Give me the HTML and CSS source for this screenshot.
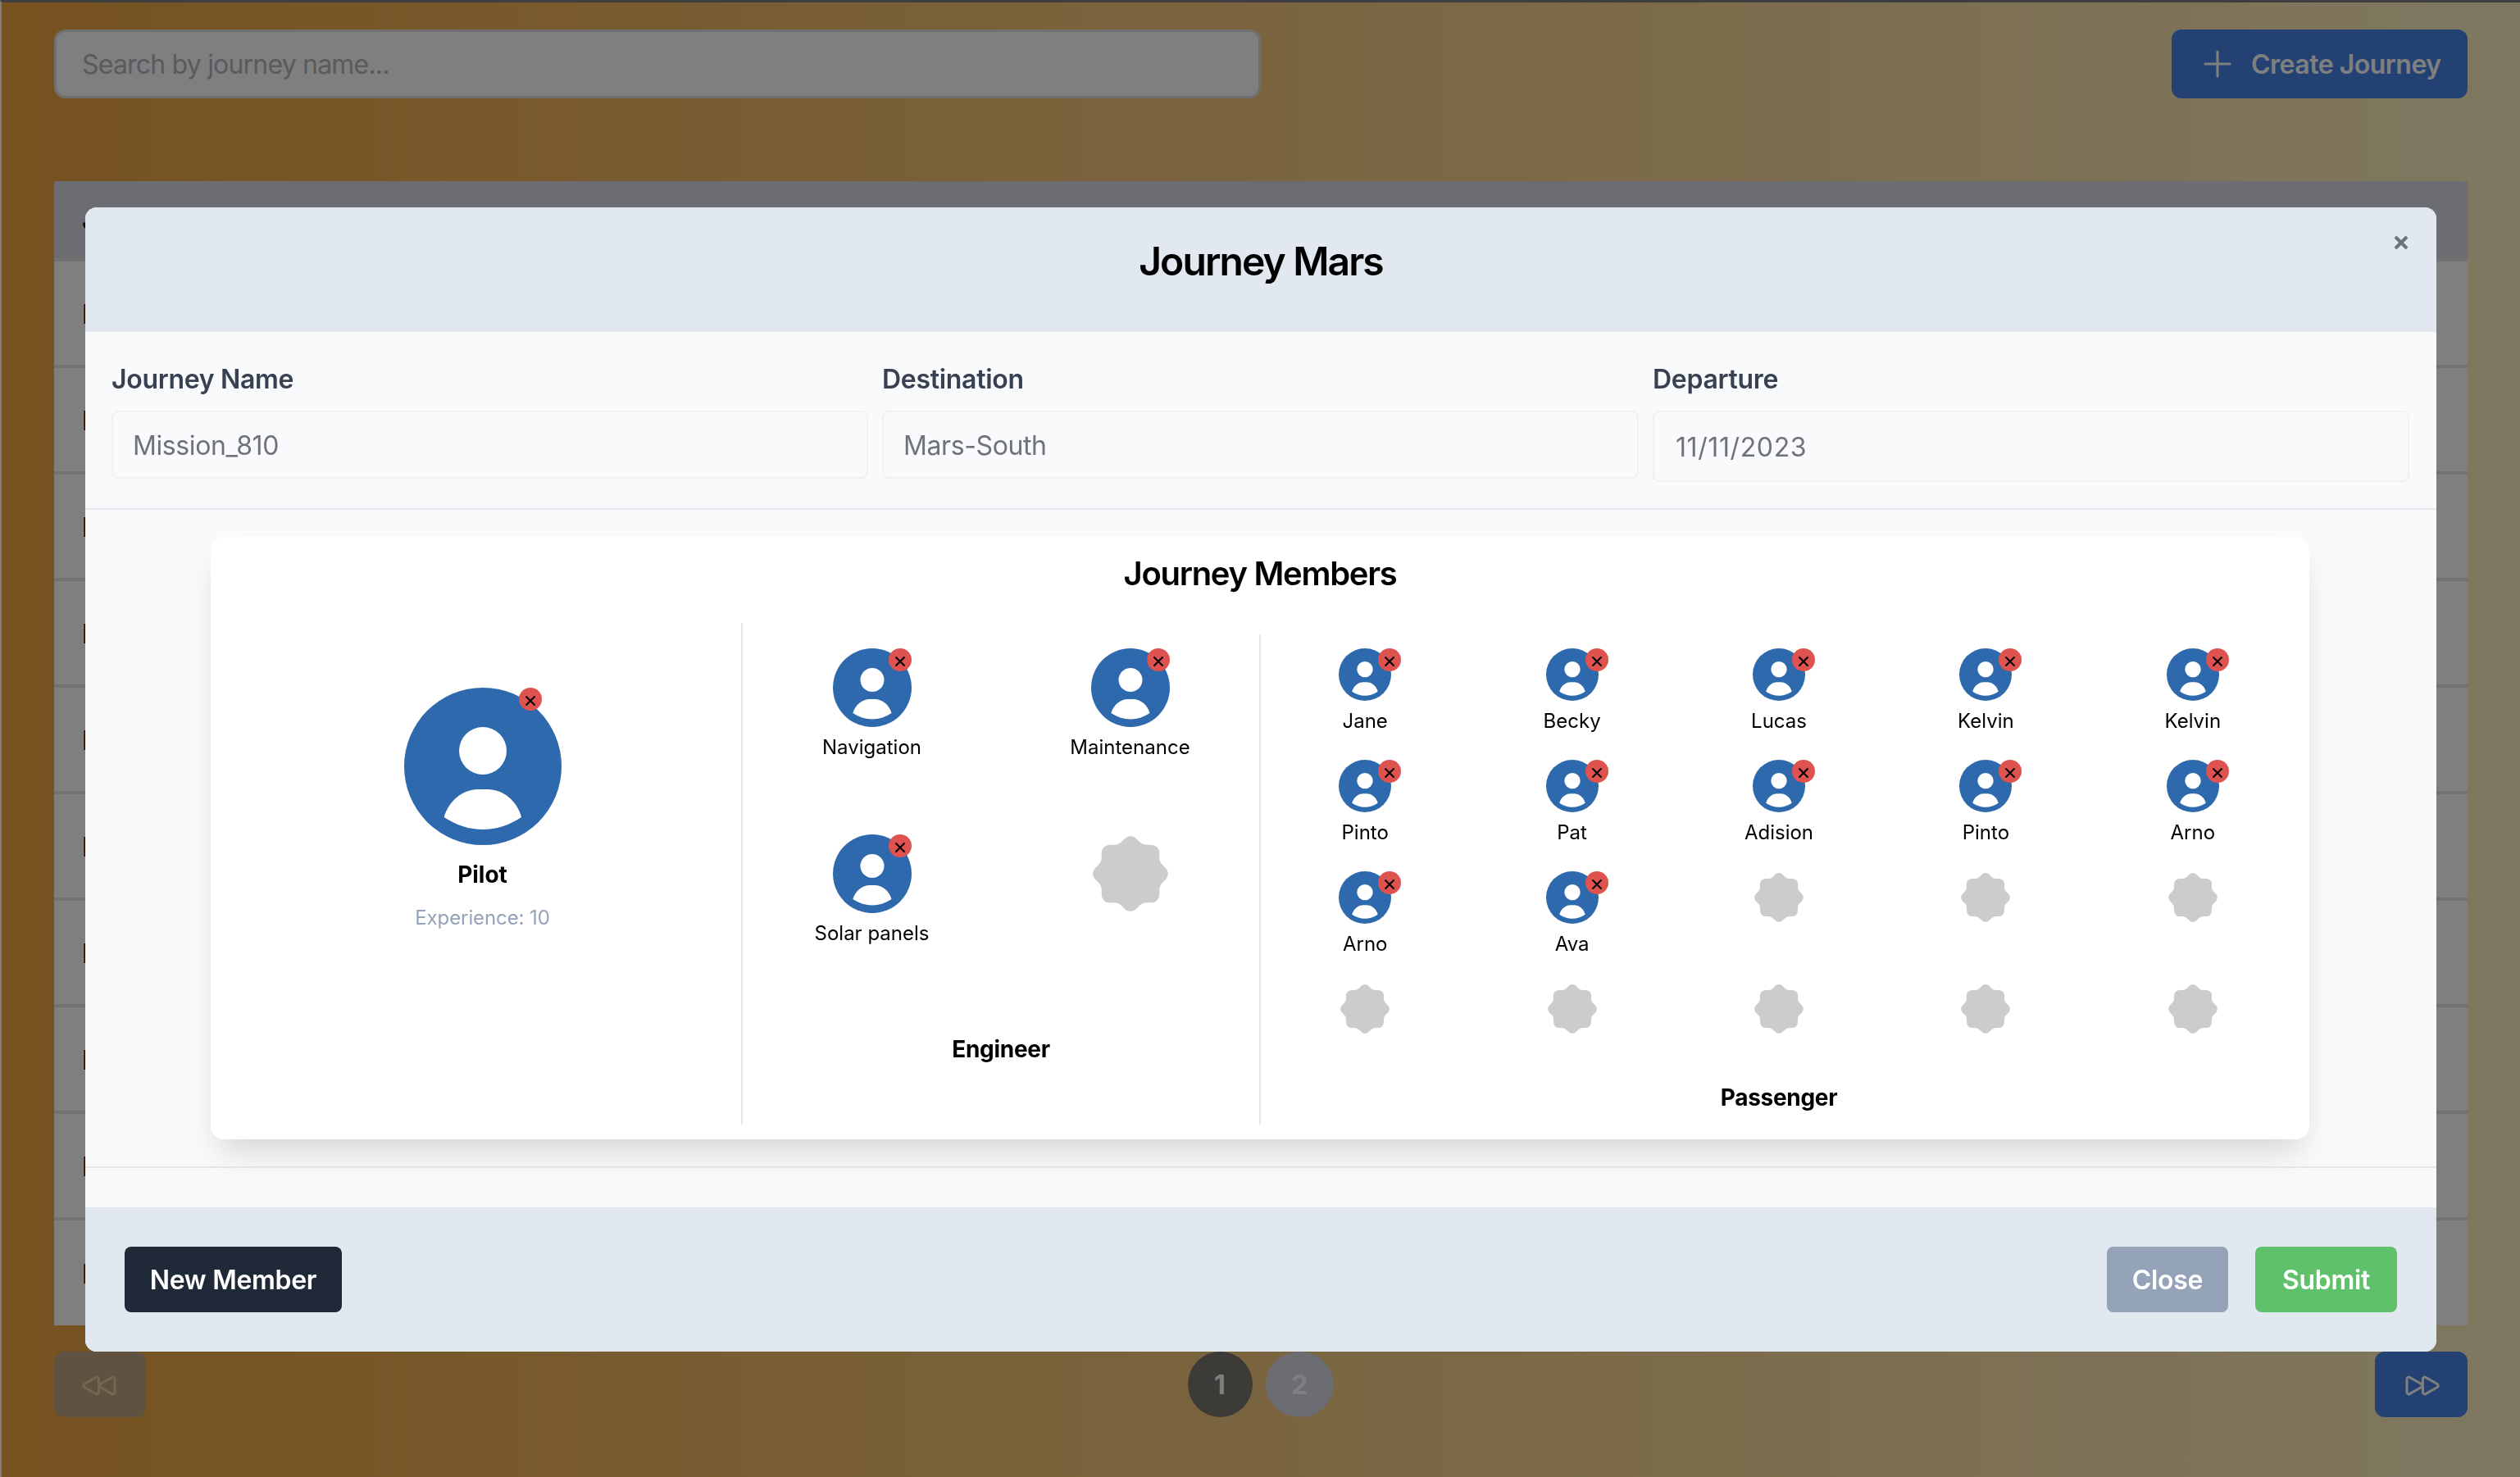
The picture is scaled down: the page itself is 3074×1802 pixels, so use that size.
FILE: index.html
```html
<!DOCTYPE html>
<html lang="en">

<head>
    <meta charset="UTF-8">
    <meta name="viewport" content="width=device-width, initial-scale=1.0">
    <title>Journeys</title>
    <link rel="stylesheet" href="styles.css">
</head>

<body>
    <svg class="defs" aria-hidden="true">
        <symbol id="person" viewBox="0 0 192 192">
            <circle cx="96" cy="96" r="96" fill="#2e69ad"></circle>
            <circle cx="96" cy="77" r="29" fill="#fff"></circle>
            <path d="M48.7 158C54 138 72 124 90 124H102C120 124 138 138 143 158C113 178 79 178 48.7 158Z" fill="#fff"></path>
        </symbol>
        <symbol id="blob" viewBox="0 0 100 100">
            <path d="M43.11 8.37Q50 0 56.89 8.37Q63.78 16.74 74.57 15.69Q85.36 14.64 84.31 25.43Q83.26 36.22 91.63 43.11Q100 50 91.63 56.89Q83.26 63.78 84.31 74.57Q85.36 85.36 74.57 84.31Q63.78 83.26 56.89 91.63Q50 100 43.11 91.63Q36.22 83.26 25.43 84.31Q14.64 85.36 15.69 74.57Q16.74 63.78 8.37 56.89Q0 50 8.37 43.11Q16.74 36.22 15.69 25.43Q14.64 14.64 25.43 15.69Q36.22 16.74 43.11 8.37Z" fill="#ccc" stroke="#ccc" stroke-width="8" stroke-linejoin="round"></path>
        </symbol>
        <symbol id="cross" viewBox="0 0 28 28">
            <circle cx="14" cy="14" r="14" fill="#de524f"></circle>
            <path d="M8.5 10.5L19.5 21.5M19.5 10.5L8.5 21.5" stroke="#000" stroke-width="2" fill="none"></path>
        </symbol>
    </svg>

    <div class="app">
        <div class="toolbar">
            <input class="search" type="text" placeholder="Search by journey name...">
            <button class="btn-create" type="button">
                <svg class="icon" viewBox="0 0 24 24" fill="none" stroke="currentColor" stroke-width="1.5" stroke-linecap="round">
                    <path d="M12 4.5v15m7.5-7.5h-15"></path>
                </svg>
                Create Journey
            </button>
        </div>

        <table class="journeys">
            <thead>
                <tr><th>Journey</th></tr>
            </thead>
            <tbody>
                <tr><td>Mars</td></tr>
                <tr><td>Mars</td></tr>
                <tr><td>Mars</td></tr>
                <tr><td>Mars</td></tr>
                <tr><td>Mars</td></tr>
                <tr><td>Mars</td></tr>
                <tr><td>Mars</td></tr>
                <tr><td>Mars</td></tr>
                <tr><td>Mars</td></tr>
                <tr><td>Mars</td></tr>
            </tbody>
        </table>

        <div class="pagination">
            <button class="page-arrow page-prev" type="button">
                <svg class="icon" viewBox="0 0 24 24" fill="none" stroke="currentColor" stroke-width="1.5" stroke-linecap="round" stroke-linejoin="round">
                    <path d="M21 16.811c0 .864-.933 1.405-1.683.977l-7.108-4.062a1.125 1.125 0 010-1.953l7.108-4.062A1.125 1.125 0 0121 8.688v8.123zM11.25 16.811c0 .864-.933 1.405-1.683.977l-7.108-4.062a1.125 1.125 0 010-1.953L9.567 7.71a1.125 1.125 0 011.683.977v8.123z"></path>
                </svg>
            </button>
            <div class="pages">
                <button class="page-num page-active" type="button">1</button>
                <button class="page-num" type="button">2</button>
            </div>
            <button class="page-arrow page-next" type="button">
                <svg class="icon" viewBox="0 0 24 24" fill="none" stroke="currentColor" stroke-width="1.5" stroke-linecap="round" stroke-linejoin="round">
                    <path d="M3 8.688c0-.864.933-1.405 1.683-.977l7.108 4.062a1.125 1.125 0 010 1.953l-7.108 4.062A1.125 1.125 0 013 16.81V8.688zM12.75 8.688c0-.864.933-1.405 1.683-.977l7.108 4.062a1.125 1.125 0 010 1.953l-7.108 4.062a1.125 1.125 0 01-1.683-.977V8.688z"></path>
                </svg>
            </button>
        </div>
    </div>

    <div class="overlay">
        <div class="modal">
            <div class="modal-header">
                <h2>Journey Mars</h2>
                <button class="modal-close" type="button" aria-label="Close">
                    <svg viewBox="0 0 18 18" fill="none" stroke="currentColor" stroke-width="4">
                        <path d="M2 2L16 16M16 2L2 16"></path>
                    </svg>
                </button>
            </div>

            <form class="journey-form">
                <div class="field">
                    <label for="name">Journey Name</label>
                    <input id="name" type="text" value="Mission_810" readonly>
                </div>
                <div class="field">
                    <label for="destination">Destination</label>
                    <input id="destination" type="text" value="Mars-South" readonly>
                </div>
                <div class="field">
                    <label for="departure">Departure</label>
                    <input id="departure" class="input-date" type="text" value="11/11/2023" readonly>
                </div>
            </form>

            <div class="members-wrap">
                <div class="members">
                    <h3>Journey Members</h3>
                    <div class="members-row">
                        <div class="col-pilot">
                            <div class="avatar avatar-lg">
                                <svg><use href="#person"></use></svg>
                                <svg class="badge"><use href="#cross"></use></svg>
                            </div>
                            <div class="pilot-name">Pilot</div>
                            <div class="pilot-exp">Experience: 10</div>
                        </div>

                        <div class="col-engineer">
                            <div class="grid-engineer">
                                <div class="member">
                                    <div class="avatar avatar-md">
                                        <svg><use href="#person"></use></svg>
                                        <svg class="badge"><use href="#cross"></use></svg>
                                    </div>
                                    <span>Navigation</span>
                                </div>
                                <div class="member">
                                    <div class="avatar avatar-md">
                                        <svg><use href="#person"></use></svg>
                                        <svg class="badge"><use href="#cross"></use></svg>
                                    </div>
                                    <span>Maintenance</span>
                                </div>
                                <div class="member">
                                    <div class="avatar avatar-md">
                                        <svg><use href="#person"></use></svg>
                                        <svg class="badge"><use href="#cross"></use></svg>
                                    </div>
                                    <span>Solar panels</span>
                                </div>
                                <div class="member">
                                    <div class="avatar avatar-md empty"><svg><use href="#blob"></use></svg></div>
                                </div>
                            </div>
                            <div class="col-title title-engineer">Engineer</div>
                        </div>

                        <div class="col-passenger">
                            <div class="grid-passenger">
                                <div class="member">
                                    <div class="avatar avatar-sm"><svg><use href="#person"></use></svg><svg class="badge"><use href="#cross"></use></svg></div>
                                    <span>Jane</span>
                                </div>
                                <div class="member">
                                    <div class="avatar avatar-sm"><svg><use href="#person"></use></svg><svg class="badge"><use href="#cross"></use></svg></div>
                                    <span>Becky</span>
                                </div>
                                <div class="member">
                                    <div class="avatar avatar-sm"><svg><use href="#person"></use></svg><svg class="badge"><use href="#cross"></use></svg></div>
                                    <span>Lucas</span>
                                </div>
                                <div class="member">
                                    <div class="avatar avatar-sm"><svg><use href="#person"></use></svg><svg class="badge"><use href="#cross"></use></svg></div>
                                    <span>Kelvin</span>
                                </div>
                                <div class="member">
                                    <div class="avatar avatar-sm"><svg><use href="#person"></use></svg><svg class="badge"><use href="#cross"></use></svg></div>
                                    <span>Kelvin</span>
                                </div>
                                <div class="member">
                                    <div class="avatar avatar-sm"><svg><use href="#person"></use></svg><svg class="badge"><use href="#cross"></use></svg></div>
                                    <span>Pinto</span>
                                </div>
                                <div class="member">
                                    <div class="avatar avatar-sm"><svg><use href="#person"></use></svg><svg class="badge"><use href="#cross"></use></svg></div>
                                    <span>Pat</span>
                                </div>
                                <div class="member">
                                    <div class="avatar avatar-sm"><svg><use href="#person"></use></svg><svg class="badge"><use href="#cross"></use></svg></div>
                                    <span>Adision</span>
                                </div>
                                <div class="member">
                                    <div class="avatar avatar-sm"><svg><use href="#person"></use></svg><svg class="badge"><use href="#cross"></use></svg></div>
                                    <span>Pinto</span>
                                </div>
                                <div class="member">
                                    <div class="avatar avatar-sm"><svg><use href="#person"></use></svg><svg class="badge"><use href="#cross"></use></svg></div>
                                    <span>Arno</span>
                                </div>
                                <div class="member">
                                    <div class="avatar avatar-sm"><svg><use href="#person"></use></svg><svg class="badge"><use href="#cross"></use></svg></div>
                                    <span>Arno</span>
                                </div>
                                <div class="member">
                                    <div class="avatar avatar-sm"><svg><use href="#person"></use></svg><svg class="badge"><use href="#cross"></use></svg></div>
                                    <span>Ava</span>
                                </div>
                                <div class="member"><div class="avatar avatar-sm empty"><svg><use href="#blob"></use></svg></div></div>
                                <div class="member"><div class="avatar avatar-sm empty"><svg><use href="#blob"></use></svg></div></div>
                                <div class="member"><div class="avatar avatar-sm empty"><svg><use href="#blob"></use></svg></div></div>
                                <div class="member"><div class="avatar avatar-sm empty"><svg><use href="#blob"></use></svg></div></div>
                                <div class="member"><div class="avatar avatar-sm empty"><svg><use href="#blob"></use></svg></div></div>
                                <div class="member"><div class="avatar avatar-sm empty"><svg><use href="#blob"></use></svg></div></div>
                                <div class="member"><div class="avatar avatar-sm empty"><svg><use href="#blob"></use></svg></div></div>
                                <div class="member"><div class="avatar avatar-sm empty"><svg><use href="#blob"></use></svg></div></div>
                            </div>
                            <div class="col-title title-passenger">Passenger</div>
                        </div>
                    </div>
                </div>
            </div>

            <div class="modal-footer">
                <button class="btn btn-dark" type="button">New Member</button>
                <div class="footer-right">
                    <button class="btn btn-gray" type="button">Close</button>
                    <button class="btn btn-green" type="button">Submit</button>
                </div>
            </div>
        </div>
    </div>
</body>

</html>
```

FILE: styles.css
```css
/* Pagina de fondo */
* {
    box-sizing: border-box;
}

body {
    font-family: Inter, "Noto Sans", sans-serif;
    margin: 0;
    padding: 0;
    height: 1802px;
    overflow: hidden;
    color: #000;
}

button {
    font-family: inherit;
    border: none;
    cursor: pointer;
}

.defs {
    display: none;
}

.icon {
    width: 48px;
    height: 48px;
    flex: none;
}

.app {
    height: 100%;
    padding: 33px 64px 0 64px;
    border-top: 3px solid #7e7e82;
    border-left: 2px solid #fff;
    background: linear-gradient(to right, #eca43e, #fef0c2);
}

.toolbar {
    display: flex;
    justify-content: space-between;
}

.search {
    width: 1472px;
    height: 84px;
    padding: 0 31px;
    background-color: #fff;
    border: 3px solid #dfe1e4;
    border-radius: 14px;
    font-family: inherit;
    font-size: 32px;
    letter-spacing: -0.8px;
}

.search::placeholder {
    color: #b4b5b8;
}

.btn-create {
    display: flex;
    align-items: center;
    gap: 17px;
    width: 361px;
    height: 84px;
    padding: 0 0 0 32px;
    background-color: #4684e6;
    color: #fff;
    border-radius: 12px;
    font-size: 32px;
    font-weight: 600;
    letter-spacing: -0.5px;
}

.journeys {
    width: 100%;
    margin-top: 101px;
    border-collapse: collapse;
    background-color: #fff;
    font-size: 32px;
}

.journeys th {
    height: 96px;
    padding-left: 34px;
    text-align: left;
    background-color: #d6dae4;
    color: #111;
    font-weight: 600;
}

.journeys td {
    height: 130px;
    padding: 2px 0 0 34px;
    color: #1f2937;
    border-top: 4px solid #e5e5e6;
    font-weight: 600;
}

.pagination {
    display: flex;
    justify-content: space-between;
    margin-top: 32px;
}

.pages {
    display: flex;
    gap: 16px;
}

.page-arrow {
    display: flex;
    align-items: center;
    justify-content: center;
    width: 113px;
    height: 80px;
    border-radius: 12px;
}

.page-prev {
    width: 112px;
    background-color: #bea480;
    color: #eacc9e;
}

.page-next {
    background-color: #4684e6;
    color: #fff;
}

.page-num {
    width: 83px;
    height: 80px;
    padding: 0;
    border-radius: 50%;
    background-color: #d6dae4;
    color: #fff;
    font-size: 32px;
    font-weight: 700;
}

.page-active {
    width: 79px;
    background-color: #7a7670;
}

/* Ventana modal */
.overlay {
    position: fixed;
    top: 0;
    left: 0;
    width: 100%;
    height: 100%;
    padding: 253px 0 0 2px;
    background-color: rgba(0, 0, 0, 0.5);
}

.modal {
    position: relative;
    width: 2868px;
    margin: 0 auto;
    background-color: #f8fafc;
    border-radius: 14px;
    overflow: hidden;
}

.modal-header {
    height: 152px;
    padding-top: 34px;
    background-color: #e2e8f0;
    text-align: center;
}

.modal-header h2 {
    margin: 0;
    font-size: 48px;
    line-height: 64px;
    font-weight: 600;
    letter-spacing: -1.9px;
}

.modal-close {
    position: absolute;
    top: 34px;
    right: 34px;
    width: 18px;
    height: 18px;
    padding: 0;
    background: none;
    color: #6b7280;
}

.modal-close svg {
    display: block;
    width: 18px;
    height: 18px;
}

.journey-form {
    display: grid;
    grid-template-columns: repeat(3, 1fr);
    gap: 17px;
    height: 217px;
    padding: 36px 33px 0 32px;
    border-bottom: 2px solid #e5e7eb;
}

.field label {
    display: block;
    height: 60px;
    padding-top: 2px;
    font-size: 32px;
    line-height: 40px;
    font-weight: 600;
    color: #374151;
    letter-spacing: -0.3px;
}

.field input {
    display: block;
    width: 100%;
    height: 83px;
    padding: 2px 24px 0;
    background-color: #f9fafb;
    border: 2px solid #eff1f3;
    border-radius: 8px;
    font-family: inherit;
    font-size: 32px;
    color: #6f727a;
    letter-spacing: -0.4px;
}

.field .input-date {
    height: 87px;
    padding-left: 26px;
    letter-spacing: 0.6px;
}

.members-wrap {
    height: 803px;
    padding-top: 33px;
    border-bottom: 2px solid #e5e7eb;
}

.members {
    width: 2560px;
    margin-left: 153px;
    padding: 21px 16px 18px;
    background-color: #fff;
    border-radius: 16px;
    box-shadow: 0 24px 40px -10px rgba(0, 0, 0, 0.15);
}

.members h3 {
    margin: 0 0 36px;
    text-align: center;
    font-size: 40px;
    line-height: 48px;
    font-weight: 600;
    letter-spacing: -1.3px;
}

.members-row {
    display: flex;
}

.col-pilot {
    width: 631px;
    display: flex;
    flex-direction: column;
    align-items: center;
    padding-top: 79px;
}

.col-engineer {
    width: 632px;
    padding-top: 31px;
    border-left: 2px solid #e5e7eb;
}

.col-passenger {
    width: 1265px;
    margin-top: 14px;
    padding: 17px 0 15px 1px;
    border-left: 2px solid #e5e7eb;
}

.grid-engineer {
    display: grid;
    grid-template-columns: repeat(2, 1fr);
    row-gap: 88px;
}

.grid-passenger {
    display: grid;
    grid-template-columns: repeat(5, 1fr);
    row-gap: 29px;
}

.member {
    display: flex;
    flex-direction: column;
    align-items: center;
    font-size: 24px;
    line-height: 36px;
}

.member span {
    margin-top: 7px;
}

.avatar {
    position: relative;
    display: flex;
    align-items: center;
    justify-content: center;
}

.avatar svg {
    display: block;
    width: 100%;
    height: 100%;
}

.avatar-lg {
    width: 192px;
    height: 192px;
}

.avatar-md {
    width: 96px;
    height: 96px;
}

.avatar-sm {
    width: 64px;
    height: 64px;
}

.avatar .badge {
    position: absolute;
    top: 0;
    right: 0;
    width: 28px;
    height: 28px;
}

.avatar-lg .badge {
    right: 24px;
}

.avatar-sm .badge {
    right: -12px;
}

.avatar-md.empty svg {
    width: 92px;
    height: 92px;
}

.avatar-sm.empty svg {
    width: 60px;
    height: 60px;
}

.pilot-name {
    margin-top: 18px;
    font-size: 28px;
    line-height: 36px;
    font-weight: 700;
}

.pilot-exp {
    margin-top: 17px;
    font-size: 24px;
    line-height: 36px;
    color: #94a3b8;
    letter-spacing: -0.1px;
}

.col-title {
    text-align: center;
    font-size: 28px;
    line-height: 36px;
    font-weight: 700;
    letter-spacing: -0.3px;
}

.title-engineer {
    margin-top: 105px;
}

.title-passenger {
    margin-top: 58px;
}

.modal-footer {
    display: flex;
    justify-content: space-between;
    margin-top: 48px;
    padding: 48px;
    background-color: #e2e8f0;
}

.footer-right {
    display: flex;
    gap: 33px;
}

.btn {
    height: 80px;
    padding: 0;
    border-radius: 8px;
    color: #fff;
    font-size: 32px;
    font-weight: 600;
    letter-spacing: -0.3px;
}

.btn-dark {
    width: 265px;
    background-color: #1f2937;
}

.btn-gray {
    width: 148px;
    background-color: #94a3b8;
}

.btn-green {
    width: 173px;
    background-color: #5fc26b;
}
```
